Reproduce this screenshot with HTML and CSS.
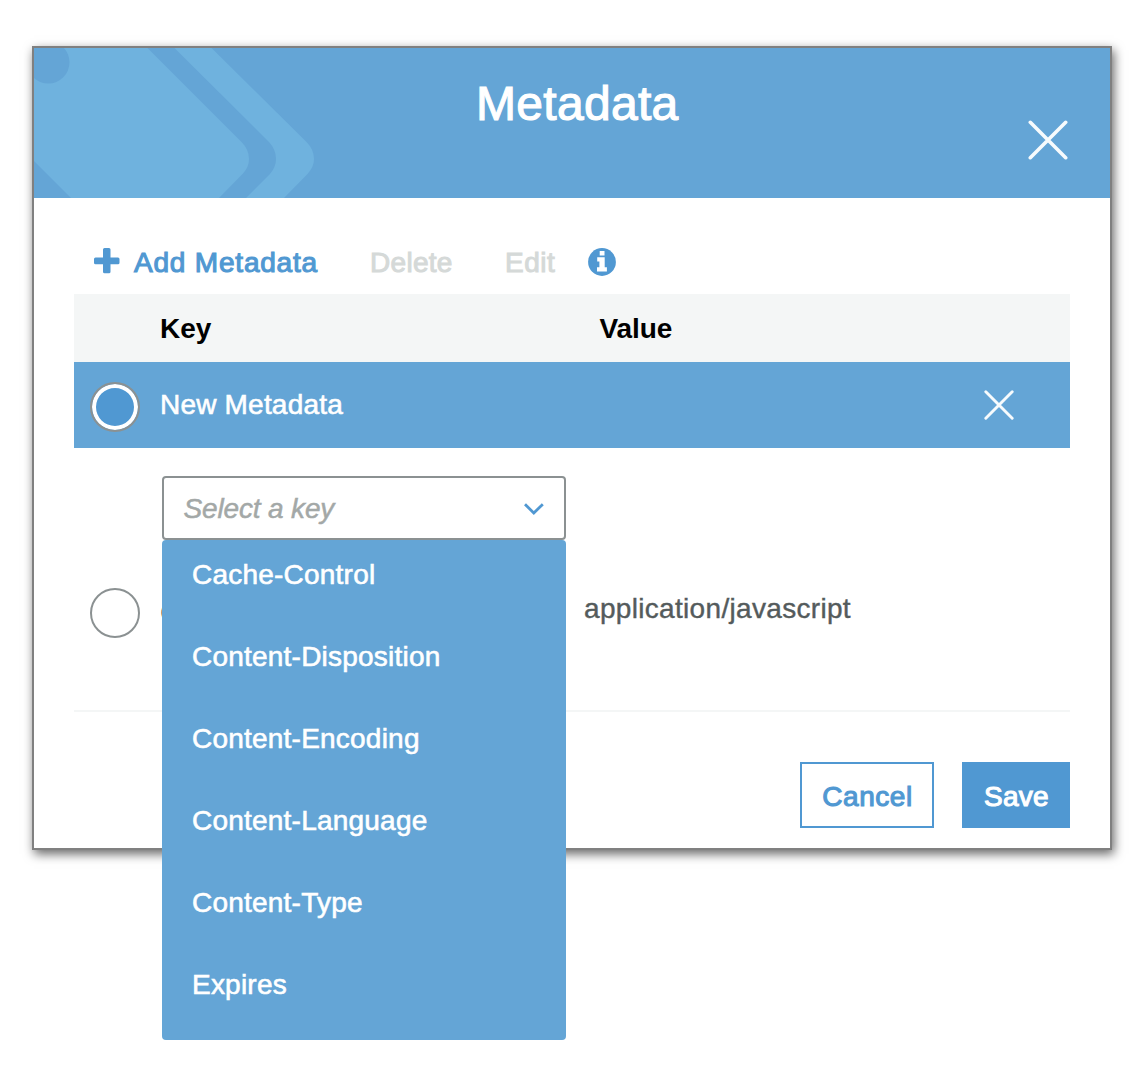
FILE: index.html
```html
<!DOCTYPE html>
<html lang="en">
<head>
<meta charset="utf-8">
<title>Metadata</title>
<link rel="stylesheet" href="styles.css">
</head>
<body>
<section class="dialog">
  <header class="dialog-header">
    <svg class="pattern" width="282" height="150" viewBox="0 0 282 150" aria-hidden="true">
      <path fill="#6fb2de" fill-rule="evenodd" d="M0 0H113.5L207.5 94Q215 101.500 215 111Q215 119 209 125.500L185 150H37L0 113Z"/>
      <circle cx="14.300" cy="14.300" r="21.200" fill="#64a5d6"/>
      <path fill="#6fb2de" d="M140.500 0H177.500L272.500 94Q280 101.500 280 111Q280 119 273.500 126L250 150H212L236 126Q242 119 242 111Q242 101.500 235 94Z"/>
    </svg>
    <h1 class="title">Metadata</h1>
    <button class="close" aria-label="Close">
      <svg width="40" height="40" viewBox="0 0 40 40"><path d="M2.300 2.300L37.700 37.700M37.700 2.300L2.300 37.700" stroke="#fff" stroke-opacity=".95" stroke-width="3.600" stroke-linecap="round"/></svg>
    </button>
  </header>
  <div class="toolbar">
    <button class="tool add">
      <svg class="plus" width="26" height="26" viewBox="0 0 26 26"><path fill="#5098d2" d="M10.500 0h4.500a1.500 1.500 0 0 1 1.500 1.500V9.500H24a1.500 1.500 0 0 1 1.500 1.500v3.800a1.500 1.500 0 0 1-1.500 1.500H16.500v7.500A1.500 1.500 0 0 1 15 25.300h-4.500A1.500 1.500 0 0 1 9 23.800V16.300H1.500A1.500 1.500 0 0 1 0 14.800V11a1.500 1.500 0 0 1 1.500-1.500H9V1.500A1.500 1.500 0 0 1 10.500 0z"/></svg>
      Add Metadata
    </button>
    <button class="tool disabled delete">Delete</button>
    <button class="tool disabled edit">Edit</button>
    <svg class="info" width="28" height="28" viewBox="0 0 28 28"><circle cx="14" cy="14" r="13.900" fill="#5098d2"/><path fill="#fff" d="M11.700 3h4.800v4.400h-4.800zM9.200 9.300h7.500v10h2.200v4.300H9v-4.300h2.400v-5.800H9.200z"/></svg>
  </div>
  <div class="table">
    <div class="row head"><span class="key">Key</span><span class="value">Value</span></div>
    <div class="row new">
      <span class="radio selected"></span>
      <span class="label">New Metadata</span>
      <svg class="remove" width="30" height="30" viewBox="0 0 30 30"><path d="M1.800 1.800L28.200 28.200M28.200 1.800L1.800 28.200" stroke="#fff" stroke-opacity=".95" stroke-width="2.900" stroke-linecap="round"/></svg>
    </div>
    <div class="row entry">
      <span class="radio"></span>
      <div class="key-cell">
        <div class="select">
          <span class="placeholder">Select a key</span>
          <svg class="chevron" width="22" height="14" viewBox="0 0 22 14"><path d="M2 2.200L10.800 11L19.800 2.200" fill="none" stroke="#5098d2" stroke-width="2.800"/></svg>
        </div>
        <span class="current">Content-Type</span>
        <ul class="menu">
          <li>Cache-Control</li>
          <li>Content-Disposition</li>
          <li>Content-Encoding</li>
          <li>Content-Language</li>
          <li>Content-Type</li>
          <li>Expires</li>
        </ul>
      </div>
      <span class="entry-value">application/javascript</span>
    </div>
  </div>
  <footer class="actions">
    <button class="btn cancel">Cancel</button>
    <button class="btn save">Save</button>
  </footer>
</section>
</body>
</html>
```
FILE: styles.css
```css
* { box-sizing: border-box; }

body {
  margin: 0;
  padding: 46px 0 0 32px;
  min-height: 1066px;
  background: #fff;
  font: 28px/31px "Liberation Sans", Arial, sans-serif;
  white-space: nowrap;
}

button {
  margin: 0;
  padding: 0;
  border: 0;
  background: none;
  font: inherit;
}

svg { display: block; flex: none; }

.dialog {
  width: 1080px;
  height: 804px;
  border: 2px solid #808080;
  background: #fff;
  box-shadow: 2px 4px 10px rgba(0, 0, 0, .6);
}

.dialog-header {
  position: relative;
  height: 150px;
  padding: 29px 0 0 442px;
  background: #64a5d6;
}

.pattern { position: absolute; left: 0; top: 0; }

.title {
  margin: 0;
  color: #fff;
  font-size: 48px;
  font-weight: 400;
  line-height: 53px;
  letter-spacing: .3px;
  -webkit-text-stroke: 1.1px #fff;
}

.close { position: absolute; left: 994px; top: 72px; }

.toolbar {
  display: flex;
  align-items: flex-start;
  height: 96px;
  padding: 49px 0 0 60px;
}

.tool {
  color: #5098d2;
  letter-spacing: .5px;
  -webkit-text-stroke: 1.1px currentColor;
}

.add {
  display: flex;
  gap: 14px;
  width: 276px;
  letter-spacing: .8px;
}

.plus { margin-top: 1px; }

.disabled { color: #d5d9d8; -webkit-text-stroke-width: 1px; }
.delete { width: 135px; text-align: left; letter-spacing: .3px; }
.edit { width: 83px; text-align: left; }
.info { margin-top: 1px; }

.table { margin: 0 40px; }
.row { display: flex; align-items: flex-start; }

.head {
  height: 68px;
  padding: 19px 0 0 86px;
  background: #f4f6f6;
  color: #000;
  font-weight: 700;
}

.key { width: 439.500px; }
.value { letter-spacing: -.1px; }

.new {
  height: 86px;
  padding-left: 16px;
  background: #64a5d6;
  color: #fff;
}

.radio {
  flex: none;
  width: 50px;
  height: 50px;
  margin-top: 20px;
  border: 2px solid #8b9192;
  border-radius: 50%;
  background: #fff;
}

.selected { background: #5098d2; box-shadow: inset 0 0 0 4px #fff; }

.label {
  width: 823.500px;
  margin: 27px 0 0 20px;
  letter-spacing: .2px;
  -webkit-text-stroke: .6px #fff;
}

.remove { margin: 28px 0 0 .5px; }

.entry {
  height: 264px;
  padding-left: 16px;
  border-bottom: 2px solid #f4f6f6;
}

.entry .radio { margin-top: 140px; }

.key-cell {
  position: relative;
  display: flex;
  flex-direction: column;
  width: 404px;
  margin: 28px 0 0 22px;
}

.select {
  display: flex;
  align-items: center;
  justify-content: space-between;
  height: 64px;
  padding: 0 19px 0 19.500px;
  border: 2px solid #8b9192;
  border-radius: 4px;
  color: #a3a8a7;
  font-style: italic;
}

.placeholder { letter-spacing: -.15px; -webkit-text-stroke: .5px currentColor; }
.chevron { margin-top: 2px; }

.current { margin: 57px 0 0 -2px; color: #545b5c; }

.menu {
  position: absolute;
  left: 0;
  top: 64px;
  width: 404px;
  height: 500px;
  margin: 0;
  padding: 19px 0 0 30px;
  border-radius: 4px;
  background: #64a5d6;
  color: #fff;
  list-style: none;
  letter-spacing: .22px;
  -webkit-text-stroke: .6px #fff;
}

.menu li { height: 82px; }

.entry-value {
  margin: 145px 0 0 18px;
  color: #545b5c;
  letter-spacing: .32px;
  -webkit-text-stroke: .4px currentColor;
}

.actions {
  display: flex;
  justify-content: flex-end;
  gap: 28px;
  padding: 50px 40px 0 0;
}

.btn {
  height: 66px;
  padding: 2px 0 0 1px;
  -webkit-text-stroke: 1.1px currentColor;
}

.cancel { width: 134px; border: 2px solid #5098d2; color: #5098d2; letter-spacing: .55px; }
.save { width: 108px; background: #5098d2; color: #fff; letter-spacing: .25px; }
```
